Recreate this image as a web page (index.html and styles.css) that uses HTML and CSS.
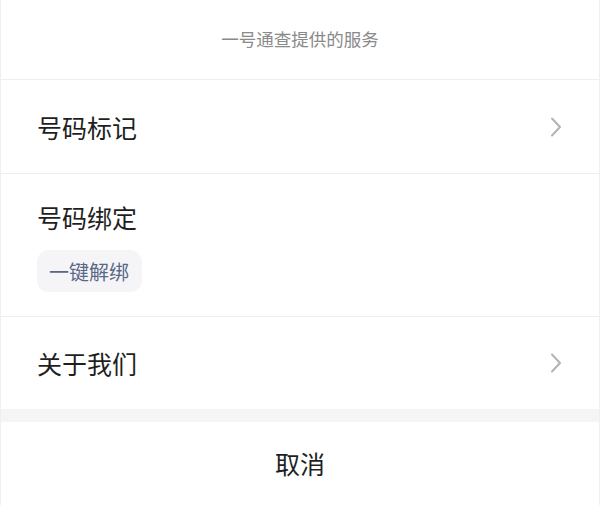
FILE: index.html
```html
<!DOCTYPE html>
<html lang="zh-CN">
<head>
<meta charset="utf-8">
<title>一号通查提供的服务</title>
<link rel="stylesheet" href="styles.css">
</head>
<body>
<div class="sheet">
  <div class="header">一号通查提供的服务</div>
  <div class="row row-link">
    <span class="label">号码标记</span>
    <svg class="chev" width="12" height="20" viewBox="0 0 12 20"><polyline points="2,1.5 10,10 2,18.5" fill="none" stroke="#b3b3b3" stroke-width="2" stroke-linecap="round" stroke-linejoin="round"/></svg>
  </div>
  <div class="row row-bind">
    <span class="label">号码绑定</span>
    <div class="btn">一键解绑</div>
  </div>
  <div class="row row-link row-last">
    <span class="label">关于我们</span>
    <svg class="chev" width="12" height="20" viewBox="0 0 12 20"><polyline points="2,1.5 10,10 2,18.5" fill="none" stroke="#b3b3b3" stroke-width="2" stroke-linecap="round" stroke-linejoin="round"/></svg>
  </div>
  <div class="gap"></div>
  <div class="cancel">取消</div>
</div>
</body>
</html>
```
FILE: styles.css
```css
html, body {
  margin: 0;
  padding: 0;
  background: #ffffff;
}
body {
  font-family: "Noto Sans CJK SC", "Noto Sans", sans-serif;
  color: #1f1f1f;
}
.sheet {
  width: 600px;
  height: 505px;
  box-sizing: border-box;
  border-left: 1px solid #efefef;
  border-right: 1px solid #efefef;
  display: flex;
  flex-direction: column;
  overflow: hidden;
}
.header {
  height: 79px;
  flex: none;
  display: flex;
  align-items: center;
  justify-content: center;
  font-size: 17.5px;
  color: #8a8a8a;
  border-bottom: 1px solid #eeeeee;
  padding-bottom: 3px;
  box-sizing: content-box;
  height: 76px;
}
.row {
  flex: none;
  border-bottom: 1px solid #eeeeee;
  padding: 0 37px 0 36px;
}
.label {
  font-size: 25px;
  line-height: 34px;
}
.row-link {
  height: 93px;
  display: flex;
  align-items: center;
  justify-content: space-between;
}
.row-last {
  border-bottom: none;
  height: 92px;
}
.row-bind {
  height: 143px;
  box-sizing: border-box;
  padding-top: 26px;
  display: flex;
  flex-direction: column;
  align-items: flex-start;
}
.btn {
  margin-top: 16px;
  height: 42px;
  padding: 0 13px 0 12px;
  display: flex;
  align-items: center;
  background: #f5f5f7;
  border-radius: 12px;
  font-size: 20px;
  color: #5a6888;
}
.chev {
  display: block;
}
.gap {
  flex: none;
  height: 13px;
  background: #f5f5f5;
}
.cancel {
  flex: 1;
  display: flex;
  align-items: center;
  justify-content: center;
  font-size: 25px;
  padding-bottom: 2px;
}
```
